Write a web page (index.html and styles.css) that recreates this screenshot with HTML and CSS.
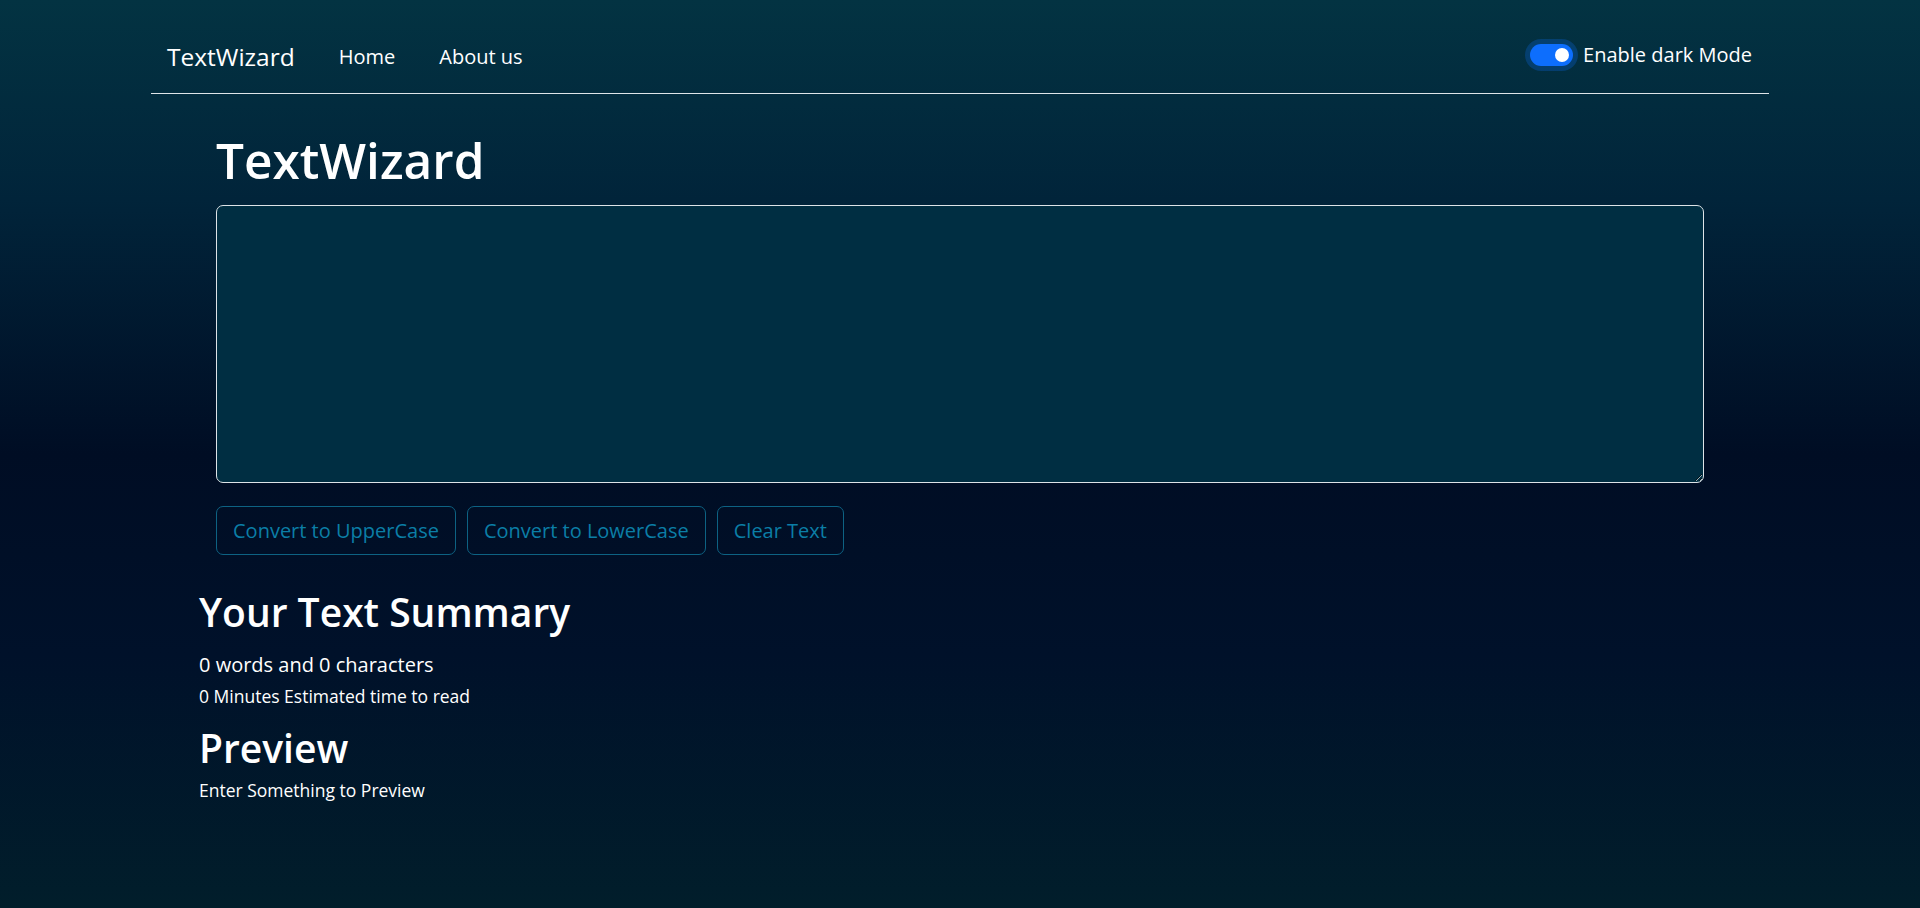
FILE: index.html
```html
<!DOCTYPE html>
<html lang="en">
<head>
<meta charset="utf-8">
<title>TextWizard</title>
<link rel="stylesheet" href="styles.css">
</head>
<body>
<nav class="navbar">
  <div class="nav-left">
    <a class="brand" href="#">TextWizard</a>
    <a class="nav-link" href="#">Home</a>
    <a class="nav-link" href="#">About us</a>
  </div>
  <label class="toggle">
    <span class="switch"><span class="knob"></span></span>
    <span class="toggle-label">Enable dark Mode</span>
  </label>
</nav>
<main class="editor">
  <h1 class="title">TextWizard</h1>
  <textarea class="text-input"></textarea>
  <div class="actions">
    <button class="btn">Convert to UpperCase</button>
    <button class="btn">Convert to LowerCase</button>
    <button class="btn">Clear Text</button>
  </div>
</main>
<section class="summary">
  <h2 class="section-title">Your Text Summary</h2>
  <p class="count">0 words and 0 characters</p>
  <p class="small-text read-time">0 Minutes Estimated time to read</p>
  <h2 class="section-title preview-title">Preview</h2>
  <p class="small-text preview-text">Enter Something to Preview</p>
</section>
</body>
</html>
```
FILE: styles.css
```css
* { box-sizing: border-box; }
html, body { margin: 0; padding: 0; }
body {
  min-height: 908px;
  font-family: "Open Sans", "Noto Sans", sans-serif;
  color: #ffffff;
  background: linear-gradient(to bottom, #033342 0%, #01243a 22%, #000d24 50%, #00112a 72%, #011e2b 100%);
}
.navbar {
  margin: 0 151px;
  padding: 37px 17px 16px 16px;
  border-bottom: 1px solid #dfe5e9;
  display: flex;
  align-items: center;
  justify-content: space-between;
  height: 94px;
}
.nav-left {
  display: flex;
  align-items: center;
  height: 40px;
}
.brand {
  color: #fff;
  text-decoration: none;
  font-size: 24.5px;
  line-height: 40px;
  margin-right: 44px;
}
.nav-link {
  color: #fff;
  text-decoration: none;
  font-size: 20px;
  line-height: 40px;
  margin-right: 44px;
}
.toggle {
  display: flex;
  align-items: center;
  margin-bottom: 4px;
}
.switch {
  width: 43px;
  height: 22px;
  border-radius: 11px;
  background: #0d6efd;
  box-shadow: 0 0 0 5px rgba(13, 110, 253, 0.25);
  display: flex;
  align-items: center;
  justify-content: flex-end;
  padding-right: 4px;
}
.knob {
  width: 14px;
  height: 14px;
  border-radius: 50%;
  background: #fff;
}
.toggle-label {
  margin-left: 10px;
  font-size: 20px;
  line-height: 30px;
}
.editor {
  margin: 0 216px;
}
.title {
  font-size: 49.5px;
  font-weight: 600;
  line-height: 60px;
  margin: 36px 0 15px;
}
.text-input {
  display: block;
  width: 100%;
  height: 278px;
  background: #002e42;
  border: 1px solid #dde3e7;
  border-radius: 7px;
  color: #fff;
  font-family: inherit;
  font-size: 20px;
  padding: 8px 15px;
  resize: vertical;
}
.actions {
  display: flex;
  gap: 11px;
  margin-top: 23px;
}
.btn {
  font-family: inherit;
  font-size: 20px;
  line-height: 30px;
  padding: 8.5px 16px;
  background: transparent;
  color: #0b7ea6;
  border: 1px solid #0d6283;
  border-radius: 7px;
}
.btn-clear {
  padding: 8.5px 15px;
}
.summary {
  margin: 0 199px;
}
.section-title {
  font-size: 39px;
  font-weight: 600;
  line-height: 48px;
  margin: 33px 0 0;
}
.count {
  font-size: 20px;
  line-height: 30px;
  margin: 14px 0 0;
}
.small-text {
  font-size: 17.5px;
  line-height: 26px;
  margin: 0;
}
.read-time { margin-top: 3px; }
.preview-title { margin-top: 15px; }
.preview-text { margin-top: 5px; }
```
